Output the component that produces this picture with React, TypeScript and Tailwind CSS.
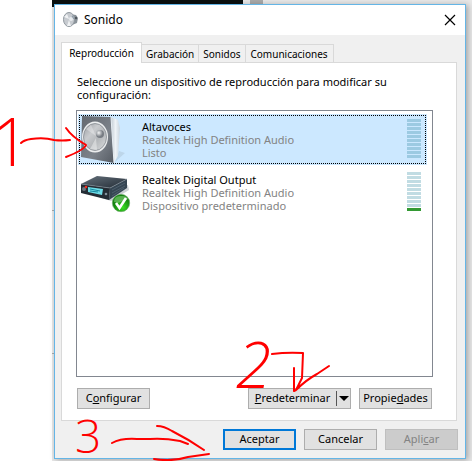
import type { ReactNode } from "react";

const tabs = ["Grabación", "Sonidos", "Comunicaciones"];

function Speaker() {
  return (
    <svg viewBox="0 0 46 48" className="h-12 w-[46px]" aria-hidden="true">
      <defs>
        <linearGradient id="spFront" x1="0" y1="0" x2="1" y2="1">
          <stop offset="0" stopColor="#646970" />
          <stop offset="0.6" stopColor="#7c828a" />
          <stop offset="1" stopColor="#555b63" />
        </linearGradient>
        <linearGradient id="spSide" x1="0" y1="0" x2="1" y2="0">
          <stop offset="0" stopColor="#c3ccd4" />
          <stop offset="0.5" stopColor="#eef3f7" />
          <stop offset="1" stopColor="#cad6e0" />
        </linearGradient>
        <linearGradient id="spCone" x1="0" y1="0" x2="1" y2="1">
          <stop offset="0" stopColor="#989ca1" />
          <stop offset="0.35" stopColor="#c9cbce" />
          <stop offset="0.6" stopColor="#b4b7ba" />
          <stop offset="1" stopColor="#dcdedf" />
        </linearGradient>
        <radialGradient id="spCap" cx="0.35" cy="0.35">
          <stop offset="0" stopColor="#f4f5f5" />
          <stop offset="1" stopColor="#777c83" />
        </radialGradient>
      </defs>
      <path d="M35 46 L45 37 L39 35Z" fill="#bdd6ea" />
      <path d="M31 1 L38 4 L40 12 L38 40 L34 46Z" fill="url(#spSide)" />
      <path d="M2 0 L31 1 L34 47 L1 41Z" fill="url(#spFront)" />
      <path d="M31 1 L34 47" stroke="#e7edf2" />
      <ellipse cx="15" cy="21" rx="13" ry="15.5" fill="#eceeef" />
      <ellipse cx="15" cy="21" rx="11.5" ry="13.5" fill="url(#spCone)" stroke="#858a90" strokeWidth="0.8" />
      <path d="M16 20 L6 13 L11 9Z" fill="#ffffff" opacity="0.3" />
      <path d="M16 22 L10 33 L17 34Z" fill="#ffffff" opacity="0.4" />
      <circle cx="20" cy="18" r="4" fill="url(#spCap)" />
    </svg>
  );
}

function Receiver() {
  return (
    <svg viewBox="0 0 52 40" className="h-10 w-[52px]" aria-hidden="true">
      <defs>
        <linearGradient id="rcTop" x1="0" y1="0" x2="1" y2="1">
          <stop offset="0" stopColor="#65717c" />
          <stop offset="1" stopColor="#232c35" />
        </linearGradient>
        <radialGradient id="okBadge" cx="0.6" cy="0.75">
          <stop offset="0" stopColor="#38df21" />
          <stop offset="1" stopColor="#13850e" />
        </radialGradient>
      </defs>
      <path d="M6 20 L31 28 L49 17 L48 12Z" fill="#cbd0d4" />
      <path d="M1 11 L17 3 L47 6 L30 15Z" fill="url(#rcTop)" />
      <path d="M30 15 L47 6 L47 15 L29 27Z" fill="#354552" />
      <path d="M1 11 L30 15 L29 27 L1 20Z" fill="#242c34" />
      <path d="M1 11 L30 15 L47 6" fill="none" stroke="#7d8994" strokeWidth="0.7" />
      <path d="M8 14 L23 16 L22 22 L8 19Z" fill="#6edce7" />
      <path d="M10 16 L20 18 M10 18 L18 19" stroke="#16899f" strokeWidth="1" />
      <circle cx="4" cy="16" r="2" fill="#6d7780" />
      <circle cx="6" cy="14" r="1.3" fill="#f22b1e" />
      <circle cx="26" cy="21" r="1.3" fill="#84929d" />
      <path d="M32 17 L45 10 M32 20 L45 13 M32 23 L44 15" stroke="#536472" strokeWidth="0.8" />
      <circle cx="41" cy="30" r="8.7" fill="url(#okBadge)" stroke="#70a66d" strokeWidth="0.6" />
      <path d="M34 29 Q34 22 42 23 Q47 23 48 26 L38 30Z" fill="#9fdd94" opacity="0.5" />
      <path d="M36 30 L39.5 35 L46 25" fill="none" stroke="#ffffff" strokeWidth="2.6" />
    </svg>
  );
}

function Meter({ tone, active }: { tone: string; active: boolean }) {
  return (
    <div className="flex w-3.5 flex-col gap-px">
      {Array.from({ length: 10 }, (_, i) => (
        <span key={i} className={`h-[3px] ${active && i === 9 ? "bg-[#339933]" : tone}`} />
      ))}
    </div>
  );
}

function Device({ name, status, selected = false, icon }: { name: string; status: string; selected?: boolean; icon: ReactNode }) {
  return (
    <li className={`flex h-[51px] p-px ${selected ? "bg-[#cce8ff]" : ""}`}>
      <div className={`flex min-w-0 flex-1 border border-dotted pt-[3px] pr-1 ${selected ? "border-black" : "border-transparent"}`}>
        <div className="-mt-[3px] w-[62px] shrink-0">{icon}</div>
        <div className="flex-1 pt-px leading-[13px]">
          <p>{name}</p>
          <p className="text-[#838383]">Realtek High Definition Audio</p>
          <p className="text-[#838383]">{status}</p>
        </div>
        <Meter tone={selected ? "bg-[#9ccae2]" : "bg-[#c1dce3]"} active={!selected} />
      </div>
    </li>
  );
}

const button = "flex h-[21px] w-[73px] items-center justify-center border border-[#adadad] bg-[#e1e1e1] whitespace-nowrap";

export default function App() {
  return (
    <div className="relative overflow-hidden bg-white font-['Noto_Sans','Open_Sans',sans-serif] text-[11px] text-black">
      <div className="absolute inset-y-0 right-0 left-[52px] bg-[#e8e8e8]">
        <div className="h-[7px] w-[191px] bg-[#0b1110]" />
        <div className="absolute top-0 left-[198px] h-1 w-[13px] bg-[#aaaaaa]" />
        <div className="absolute top-[210px] left-0 h-px w-0.5 bg-[#aaaaaa]" />
        <div className="absolute top-[353px] left-0 h-px w-0.5 bg-[#aaaaaa]" />
      </div>
      <div className="relative pt-1 pr-1.5 pb-0.5 pl-[54px]">
        <main className="border border-[#64b5e6] bg-[#f0f0f0] shadow-[2px_1px_6px_rgba(0,0,0,0.3)]">
          <header className="flex h-[30px] items-center bg-white pr-[9px] pl-2 text-xs">
            <svg viewBox="0 0 16 16" className="mr-[5px] size-4" aria-hidden="true">
              <path d="M7 2 L13 3 L15 6 L14 11 L9 13Z" fill="#8b939a" />
              <ellipse cx="6" cy="7.5" rx="5.5" ry="7" fill="#c7cbd0" stroke="#8f979e" />
              <path d="M6 7 L1 5 L4 2Z M6 8 L4 14 L8 14Z" fill="#f0f2f4" />
              <path d="M7 7 L10 3 L11 7Z" fill="#8e9ca9" />
              <circle cx="8" cy="7" r="2" fill="#e8ebee" />
              <circle cx="13" cy="6" r="1.2" fill="#4f575e" />
            </svg>
            <h1 className="flex-1">Sonido</h1>
            <button type="button" aria-label="Cerrar" className="size-3">
              <svg viewBox="0 0 12 12" className="size-3" aria-hidden="true">
                <path d="M1 1 L11 11 M11 1 L1 11" stroke="#000" strokeWidth="1.2" />
              </svg>
            </button>
          </header>

          <div className="px-1.5 pt-[7px] pr-2">
            <div role="tablist" className="flex h-5 items-end pr-10 text-[10px]">
              <button type="button" role="tab" aria-selected="true" className="z-10 -mb-px flex h-[21px] w-[81px] items-center justify-center border border-b-0 border-[#d9d9d9] bg-white">
                Reproducción
              </button>
              {tabs.map((t) => (
                <button key={t} type="button" role="tab" aria-selected="false" className="flex h-[18px] items-center border-t border-r border-[#d9d9d9] px-1 pt-0.5 last:px-[5px]">
                  {t}
                </button>
              ))}
            </div>
            <section className="border border-[#d9d9d9] bg-white pt-3 pr-[23px] pb-[11px] pl-3.5">
              <p className="pl-px leading-[13px]">Seleccione un dispositivo de reproducción para modificar su configuración:</p>
              <ul className="mt-[9px] flex h-[267px] flex-col gap-0.5 border border-[#828790] py-[3px] pr-[5px] pl-px">
                <Device name="Altavoces" status="Listo" selected icon={<Speaker />} />
                <Device name="Realtek Digital Output" status="Dispositivo predeterminado" icon={<div className="pt-1"><Receiver /></div>} />
              </ul>
              <div className="mt-[11px] flex justify-between px-px">
                <button type="button" className={button}><span>C<u>o</u>nfigurar</span></button>
                <div className="flex gap-2">
                  <div className="flex h-[21px] w-[103px] border border-[#adadad] bg-[#e1e1e1]">
                    <button type="button" className="flex-1"><u>P</u>redeterminar</button>
                    <button type="button" aria-label="Más opciones" className="my-0.5 flex w-3.5 items-center border-l border-[#555555] pl-0.5">
                      <span className="border-x-[5px] border-t-[5px] border-x-transparent border-t-black" />
                    </button>
                  </div>
                  <button type="button" className={button}><span>Propie<u>d</u>ades</span></button>
                </div>
              </div>
            </section>
          </div>

          <footer className="flex justify-end gap-2 pt-2 pr-[7px] pb-2">
            <button type="button" className="flex h-[21px] w-[73px] items-center justify-center border-2 border-[#0078d7] bg-[#e1e1e1]">Aceptar</button>
            <button type="button" className={button}>Cancelar</button>
            <button type="button" disabled className="flex h-[21px] w-[73px] items-center justify-center border border-[#bfbfbf] bg-[#cccccc] text-[#838383]"><span>Apli<u>c</u>ar</span></button>
          </footer>
        </main>
      </div>

      <div className="pointer-events-none absolute inset-0 font-['Open_Sans',sans-serif] leading-none font-light text-[#ff0000]">
        <span className="absolute top-[107px] -left-2 text-[66px]">1</span>
        <span className="absolute top-[332px] left-[236px] text-[64px] italic">2</span>
        <span className="absolute top-[412px] left-[75px] text-[46px]">3</span>
        <svg width="472" height="461" viewBox="0 0 472 461" className="absolute top-0 left-0" fill="none" stroke="#ff0000" strokeWidth="2" strokeLinecap="round" strokeLinejoin="round" aria-hidden="true">
          <path d="M21 143 Q24 140 31 139 Q44 137 54 140 Q62 141 70 140 M66 128 Q72 137 86 145 Q84 150 66 157" />
          <path d="M272 354 Q287 352 303 353 L302 378 L296 390 L294 391 L294 368 M296 390 Q306 380 317 374 L329 366" />
          <path d="M112 443 Q121 438 137 439 L150 439 Q164 438 180 441 L188 444 M157 426 Q164 426 172 431 Q188 439 204 450 M154 459 Q172 462 188 457 L209 454" />
        </svg>
      </div>
    </div>
  );
}
